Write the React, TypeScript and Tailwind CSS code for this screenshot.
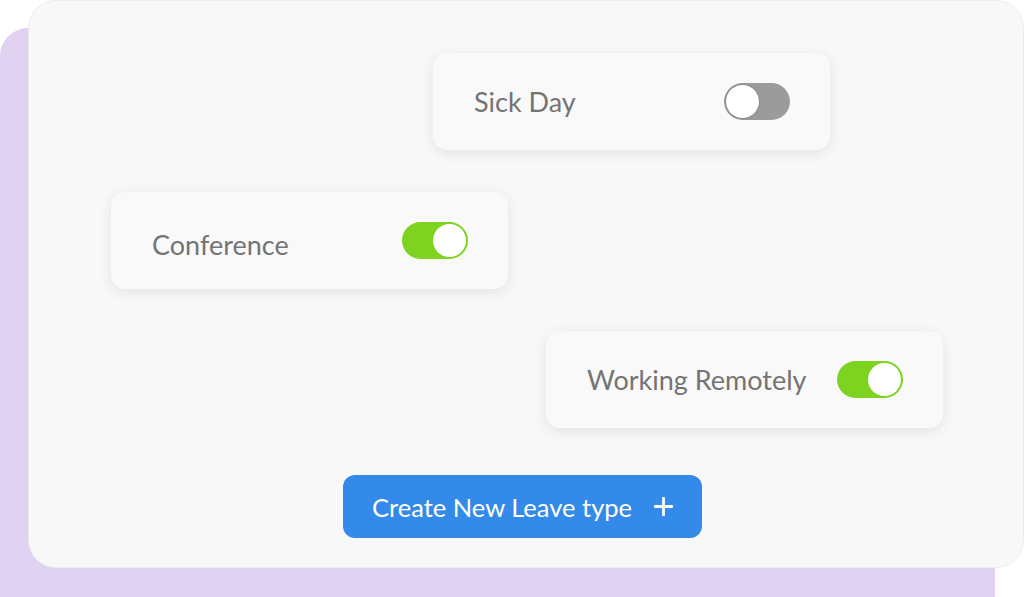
import React from "react";

function Toggle({ on }: { on: boolean }) {
  return (
    <div
      className={`flex h-[37px] w-[66px] items-center rounded-full p-[2px] ${
        on ? "justify-end bg-[#7ed321]" : "justify-start bg-[#9b9b9b]"
      }`}
    >
      <div
        className={`h-[33px] w-[33px] rounded-full bg-white ${
          on ? "ring-1 ring-[#7ed321]" : "ring-1 ring-[#8a8a8a]"
        }`}
      />
    </div>
  );
}

function LeaveCard({
  label,
  on,
  className,
  labelClass = "",
}: {
  label: string;
  on: boolean;
  className: string;
  labelClass?: string;
}) {
  return (
    <div
      className={`flex h-[97px] w-[397px] items-center justify-between rounded-[14px] bg-[#f9f9f9] pl-[41px] pr-[40px] shadow-[0_3px_14px_rgba(0,0,0,0.09)] ${className}`}
    >
      <span className={`text-[27px] leading-none text-[#747474] ${labelClass}`}>{label}</span>
      <Toggle on={on} />
    </div>
  );
}

export default function App() {
  return (
    <div className="relative h-[597px] w-[1024px] overflow-hidden bg-white font-['Lato','Noto_Sans',sans-serif]">
      {/* purple backdrop card */}
      <div className="absolute left-0 top-[28px] h-[600px] w-[995px] rounded-[28px] bg-[#e0d3f1]" />

      <div className="relative ml-[28px] flex h-[568px] w-[996px] flex-col items-start rounded-[28px] border border-[#ececec] bg-[#f8f8f8]">
        <LeaveCard label="Sick Day" on={false} className="ml-[404px] mt-[52px]" />
        <LeaveCard label="Conference" on className="ml-[82px] mt-[42px]" labelClass="pt-[8px]" />
        <LeaveCard label="Working Remotely" on className="ml-[517px] mt-[42px]" />
        <button
          type="button"
          className="ml-[314px] mt-[47px] flex h-[63px] w-[359px] items-center rounded-[12px] bg-[#338ae9] pl-[29px] pt-[3px] text-[25.5px] leading-none text-white"
        >
          <span>Create New Leave type</span>
          <svg className="ml-[22px] -mt-[3px]" width="19" height="19" viewBox="0 0 19 19" fill="none">
            <path d="M9.5 1v17M1 9.5h17" stroke="white" strokeWidth="2.8" strokeLinecap="round" />
          </svg>
        </button>
      </div>
    </div>
  );
}
